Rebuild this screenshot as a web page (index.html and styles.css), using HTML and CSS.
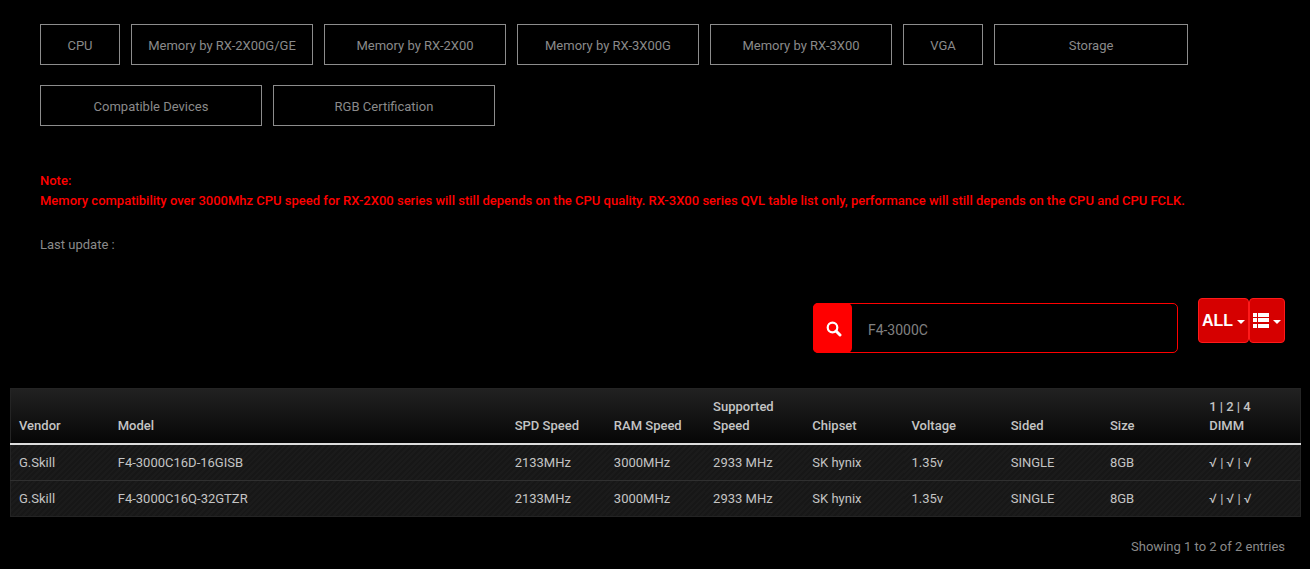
FILE: index.html
```html
<!DOCTYPE html>
<html lang="en">
<head>
<meta charset="utf-8">
<title>Memory Support List</title>
<link rel="stylesheet" href="styles.css">
</head>
<body>
<main class="page">
  <nav class="tabs">
    <button class="tab tab-small" type="button">CPU</button>
    <button class="tab tab-medium" type="button">Memory by RX-2X00G/GE</button>
    <button class="tab tab-medium" type="button">Memory by RX-2X00</button>
    <button class="tab tab-medium" type="button">Memory by RX-3X00G</button>
    <button class="tab tab-medium" type="button">Memory by RX-3X00</button>
    <button class="tab tab-small" type="button">VGA</button>
    <button class="tab tab-storage" type="button">Storage</button>
    <button class="tab tab-large" type="button">Compatible Devices</button>
    <button class="tab tab-large" type="button">RGB Certification</button>
  </nav>

  <p class="note">Note:<br>Memory compatibility over 3000Mhz CPU speed for RX-2X00 series will still depends on the CPU quality. RX-3X00 series QVL table list only, performance will still depends on the CPU and CPU FCLK.</p>
  <p class="updated">Last update :</p>

  <div class="toolbar">
    <form class="search">
      <button class="search-button" type="button" aria-label="Search">
        <svg class="search-icon" viewBox="0 0 16 16" aria-hidden="true"><circle cx="6.5" cy="6.5" r="4.8" fill="none" stroke="currentColor" stroke-width="2.2"/><path d="M10 10l4 4" stroke="currentColor" stroke-width="3" stroke-linecap="round"/></svg>
      </button>
      <input class="search-input" type="text" value="F4-3000C" aria-label="Search the list">
    </form>
    <div class="options">
      <button class="option" type="button">ALL<span class="caret"></span></button>
      <button class="option" type="button" aria-label="Columns">
        <svg class="list-icon" viewBox="0 0 16 15" aria-hidden="true"><path fill="currentColor" d="M0 0h4v4H0zM5 0h11v4H5zM0 5h4v4H0zM5 5h11v4H5zM0 11h4v4H0zM5 11h11v4H5z"/></svg>
        <span class="caret"></span>
      </button>
    </div>
  </div>

  <table class="list">
    <thead>
      <tr>
        <th>Vendor</th><th class="model">Model</th><th>SPD Speed</th><th>RAM Speed</th><th>Supported Speed</th><th>Chipset</th><th>Voltage</th><th>Sided</th><th>Size</th><th>1 | 2 | 4<br>DIMM</th>
      </tr>
    </thead>
    <tbody>
      <tr>
        <td>G.Skill</td><td>F4-3000C16D-16GISB</td><td>2133MHz</td><td>3000MHz</td><td>2933 MHz</td><td>SK hynix</td><td>1.35v</td><td>SINGLE</td><td>8GB</td><td>√ | √ | √</td>
      </tr>
      <tr>
        <td>G.Skill</td><td>F4-3000C16Q-32GTZR</td><td>2133MHz</td><td>3000MHz</td><td>2933 MHz</td><td>SK hynix</td><td>1.35v</td><td>SINGLE</td><td>8GB</td><td>√ | √ | √</td>
      </tr>
    </tbody>
  </table>
  <p class="summary">Showing 1 to 2 of 2 entries</p>
</main>
</body>
</html>
```
FILE: styles.css
```css
* {
  box-sizing: border-box;
}

body {
  margin: 0;
  background: #000;
  color: #8a8a8a;
  font: 13px/20px Roboto, "Liberation Sans", sans-serif;
}

button,
input {
  margin: 0;
  font: inherit;
}

p {
  margin: 0;
}

.page {
  padding: 24px 9px 0 10px;
}

.tabs {
  display: flex;
  flex-wrap: wrap;
  gap: 20px 11px;
  padding: 0 30px;
}

.tab {
  height: 41px;
  padding: 2px 4px 0;
  border: 1px solid #8c8c8c;
  background: #000;
  color: #8a8a8a;
  white-space: nowrap;
}

.tab-small {
  width: 80px;
}

.tab-medium {
  width: 182px;
}

.tab-storage {
  width: 194px;
}

.tab-large {
  width: 222px;
}

.note {
  padding: 45px 30px 0;
  color: #f00;
  font-weight: 500;
}

.updated {
  padding: 24px 30px 0;
}

.toolbar {
  display: flex;
  justify-content: flex-end;
  align-items: flex-start;
  gap: 20px;
  padding: 43px 16px 0 0;
}

.search {
  display: flex;
  width: 365px;
  height: 50px;
  margin-top: 5px;
  border: 1px solid #f00;
  border-radius: 5px;
}

.search-button {
  display: flex;
  align-items: center;
  justify-content: center;
  width: 39px;
  margin: -1px 0 -1px -1px;
  padding: 2px 0 0 4px;
  border: 0;
  border-radius: 5px;
  background: #f00;
  color: #fff;
}

.search-icon {
  width: 16px;
  height: 16px;
}

.search-input {
  flex: 1;
  min-width: 0;
  padding: 4px 16px 0;
  border: 0;
  background: transparent;
  color: #808080;
  font-size: 14px;
  outline: 0;
}

.options {
  display: flex;
}

.option {
  display: flex;
  align-items: center;
  gap: 4px;
  height: 45px;
  padding: 0 3px;
  border: 1px solid #ff1a1a;
  border-radius: 4px;
  background: #d60000;
  color: #fff;
  font: bold 16px/24px "Liberation Sans", Arial, sans-serif;
}

.list-icon {
  width: 16px;
  height: 15px;
}

.caret {
  margin-top: 3px;
  border: 4px solid transparent;
  border-top-color: #fff;
  border-bottom: 0;
}

.list {
  width: 100%;
  margin-top: 35px;
  border: 1px solid #242424;
  border-collapse: collapse;
  table-layout: fixed;
  color: #c4c4c4;
}

.list thead {
  background: linear-gradient(#212121, #050505);
}

.list tbody {
  background: repeating-linear-gradient(135deg, #171717 0 2px, #1b1b1b 2px 4px);
}

.list th {
  padding: 8px;
  border-bottom: 2px solid #ddd;
  font-weight: 500;
  line-height: 19px;
  text-align: left;
  vertical-align: bottom;
}

.list .model {
  width: 30.77%;
}

.list td {
  padding: 8px;
  line-height: 19px;
}

.list tr + tr td {
  border-top: 1px solid #303030;
}

.summary {
  padding: 20px 16px 0 0;
  text-align: right;
}
```
